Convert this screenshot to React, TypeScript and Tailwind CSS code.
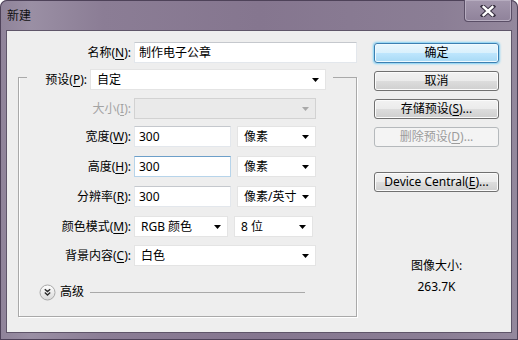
import React from "react";

const U = ({ c }: { c: string }) => (
  <span className="underline underline-offset-[2px] decoration-1">{c}</span>
);

function Arrow({ disabled }: { disabled?: boolean }) {
  return (
    <svg width="7" height="4" viewBox="0 0 7 4" className="shrink-0">
      <path d="M0 0H7L3.5 4Z" fill={disabled ? "#a9a9a9" : "#000"} />
    </svg>
  );
}

function Select({
  className,
  text,
  disabled,
}: {
  className: string;
  text?: string;
  disabled?: boolean;
}) {
  return (
    <div
      className={
        "flex h-[21px] items-center justify-between pl-[6px] pr-[6px] " +
        (disabled
          ? "bg-[#eaeaea] border border-[#d2d2d2] "
          : "bg-white border border-[#e4e4e4] ") +
        className
      }
    >
      <span className="leading-none">{text}</span>
      <Arrow disabled={disabled} />
    </div>
  );
}

function Input({ className, text, focus }: { className: string; text: string; focus?: boolean }) {
  return (
    <div
      className={
        "flex h-[21px] items-center bg-white pl-[4px] border " +
        (focus
          ? "border-[#b7d4ea] border-t-[#6c9fc9] "
          : "border-[#e3e7ec] border-t-[#c5c8cd] ") +
        className
      }
    >
      <span className="leading-none">{text}</span>
    </div>
  );
}

function Btn({
  children,
  kind,
  className = "",
}: {
  children: React.ReactNode;
  kind?: "primary" | "disabled";
  className?: string;
}) {
  const base =
    "flex h-[20px] w-[125px] items-center justify-center rounded-[3px] border leading-none ";
  if (kind === "primary")
    return (
      <div
        className={
          base +
          "border-[#3c7fb1] bg-[linear-gradient(#e9f6fd_0%,#d9f0fc_50%,#bee6fd_50%,#a7d9f5_100%)] shadow-[0_0_2px_1px_#7fd0f5,inset_0_0_0_1px_#f0fafe] " +
          className
        }
      >
        {children}
      </div>
    );
  if (kind === "disabled")
    return (
      <div
        className={base + "border-[#b5b9bc] bg-[#f4f4f4] text-[#9c9c9c] " + className}
      >
        {children}
      </div>
    );
  return (
    <div
      className={
        base +
        "border-[#707070] bg-[linear-gradient(#f2f2f2_0%,#ebebeb_50%,#dddddd_50%,#cfcfcf_100%)] shadow-[inset_0_0_0_1px_#fbfbfb] " +
        className
      }
    >
      {children}
    </div>
  );
}

function Row({
  label,
  disabled,
  className = "",
  children,
}: {
  label: React.ReactNode;
  disabled?: boolean;
  className?: string;
  children: React.ReactNode;
}) {
  return (
    <div className={"flex items-center " + className}>
      <div
        className={
          "w-[115px] pr-[3px] text-right leading-none " + (disabled ? "text-[#a3a3a3]" : "")
        }
      >
        {label}
      </div>
      <div className="flex items-center gap-[6px]">{children}</div>
    </div>
  );
}

export default function App() {
  return (
    <div className="relative h-[340px] w-[518px] overflow-hidden rounded-t-[7px] bg-[linear-gradient(90deg,#8f8399_0%,#9a8fa4_6%,#8b7d95_20%,#85768f_50%,#8b7e95_85%,#94889d_100%)] font-['Noto_Sans','Noto_Sans_CJK_SC',sans-serif] text-[12px] text-black shadow-[inset_0_0_0_1px_#4e4259]">
      {/* title bar */}
      <div className="flex h-[30px] items-start justify-between">
        <div className="pl-[7px] pt-[10px] leading-none text-[#111]">新建</div>
        <div className="mr-[6px] flex h-[22px] w-[48px] items-center justify-center rounded-b-[4px] border border-t-0 border-[#5a4e66] bg-[linear-gradient(#a397ad,#8f829a)] shadow-[inset_0_0_0_1px_#b7adc0]">
          <svg width="16" height="12" viewBox="0 0 16 12">
            <path
              d="M3 1.5L13 10.5M13 1.5L3 10.5"
              stroke="#3b3344"
              strokeWidth="4.5"
              strokeLinecap="square"
            />
            <path
              d="M3.6 2L12.4 10M12.4 2L3.6 10"
              stroke="#ffffff"
              strokeWidth="2.4"
              strokeLinecap="square"
            />
          </svg>
        </div>
      </div>

      {/* content */}
      <div className="mx-[6px] flex h-[303px] border border-[#5f5569] bg-[#eeeeee]">
        {/* left column */}
        <div className="w-[350px]">
          <div className="mt-[11px] flex items-center">
            <div className="w-[124px] text-right leading-none">
              名称(<U c="N" />):
            </div>
            <Input className="ml-[3px] w-[223px]" text="制作电子公章" />
          </div>

          <fieldset className="ml-[11px] mt-[6px] w-[339px] border border-[#a9a9a9] px-0 pb-[16px] shadow-[inset_1px_0_0_#ffffff,1px_1px_0_#ffffff]">
            <legend className="ml-[8px] h-[16px] pr-[7px]">
              <div className="flex items-start">
                <div className="w-[63px] pt-[5px] pr-[3px] text-right leading-none">
                  预设(<U c="P" />):
                </div>
                <Select className="w-[236px]" text="自定" />
              </div>
            </legend>

            <Row label={<>大小(<U c="I" />):</>} disabled className="mt-[13px]">
              <Select className="w-[182px]" disabled />
            </Row>
            <Row label={<>宽度(<U c="W" />):</>} className="mt-[7px]">
              <Input className="w-[97px]" text="300" />
              <Select className="w-[79px]" text="像素" />
            </Row>
            <Row label={<>高度(<U c="H" />):</>} className="mt-[9px]">
              <Input className="w-[97px]" text="300" focus />
              <Select className="w-[79px]" text="像素" />
            </Row>
            <Row label={<>分辨率(<U c="R" />):</>} className="mt-[9px]">
              <Input className="w-[97px]" text="300" />
              <Select className="w-[79px]" text="像素/英寸" />
            </Row>
            <Row label={<>颜色模式(<U c="M" />):</>} className="mt-[9px]">
              <Select className="w-[94px]" text="RGB 颜色" />
              <Select className="w-[79px]" text="8 位" />
            </Row>
            <Row label={<>背景内容(<U c="C" />):</>} className="mt-[8px]">
              <Select className="w-[182px]" text="白色" />
            </Row>

            <div className="ml-[20px] mt-[18px] flex h-[16px] items-center">
              <svg width="17" height="17" viewBox="0 0 17 17" className="shrink-0">
                <defs>
                  <linearGradient id="cg" x1="0" y1="0" x2="0" y2="1">
                    <stop offset="0" stopColor="#ffffff" />
                    <stop offset="1" stopColor="#d9d9d9" />
                  </linearGradient>
                </defs>
                <circle cx="8.5" cy="8.5" r="7.5" fill="url(#cg)" stroke="#a8a8a8" />
                <path
                  d="M5.8 5.2L8.5 7.6L11.2 5.2M5.8 8.6L8.5 11L11.2 8.6"
                  fill="none"
                  stroke="#2a2a2a"
                  strokeWidth="1.4"
                />
              </svg>
              <span className="ml-[4px] leading-none">高级</span>
              <div className="ml-[6px] h-px w-[215px] bg-[#a9a9a9]" />
            </div>
          </fieldset>
        </div>

        {/* right column */}
        <div className="ml-[17px] flex w-[125px] flex-col">
          <Btn kind="primary" className="mt-[12px]">
            确定
          </Btn>
          <Btn className="mt-[8px]">取消</Btn>
          <Btn className="mt-[8px]">
            存储预设(<U c="S" />)...
          </Btn>
          <Btn kind="disabled" className="mt-[8px]">
            删除预设(<U c="D" />)...
          </Btn>
          <Btn className="mt-[25px]">
            Device Central(<U c="E" />)...
          </Btn>
          <div className="mt-[68px] text-center leading-none">图像大小:</div>
          <div className="mt-[9px] text-center leading-none">263.7K</div>
        </div>
      </div>
    </div>
  );
}
